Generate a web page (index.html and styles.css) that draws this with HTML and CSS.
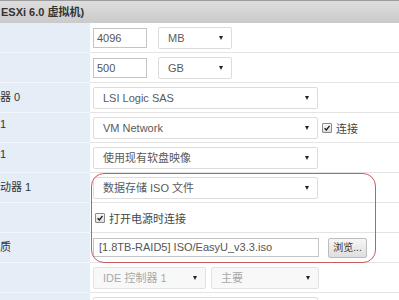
FILE: index.html
```html
<!DOCTYPE html>
<html lang="zh-CN">
<head>
    <meta charset="UTF-8">
    <meta name="viewport" content="width=device-width, initial-scale=1.0">
    <title>编辑设置</title>
    <link rel="stylesheet" href="styles.css">
</head>
<body>

    <div class="header">ESXi 6.0 虚拟机)</div>

    <div class="form">
        <!-- Memory -->
        <div class="row">
            <div class="label"></div>
            <div class="field">
                <div class="input small">4096</div>
                <div class="select unit">MB<span class="caret"></span></div>
            </div>
        </div>

        <!-- Hard disk -->
        <div class="row">
            <div class="label"></div>
            <div class="field">
                <div class="input small">500</div>
                <div class="select unit">GB<span class="caret"></span></div>
            </div>
        </div>

        <div class="row">
            <div class="label">器 0</div>
            <div class="field">
                <div class="select wide">LSI Logic SAS<span class="caret"></span></div>
            </div>
        </div>

        <div class="row">
            <div class="label">1</div>
            <div class="field">
                <div class="select wide">VM Network<span class="caret"></span></div>
                <span class="check"><svg viewBox="0 0 10 10"><path d="M2 5.2 L4.2 7.4 L8.2 2.4" /></svg></span>
                <span class="check-text">连接</span>
            </div>
        </div>

        <div class="row">
            <div class="label">1</div>
            <div class="field">
                <div class="select wide">使用现有软盘映像<span class="caret"></span></div>
            </div>
        </div>

        <!-- CD/DVD drive -->
        <div class="row">
            <div class="label">动器 1</div>
            <div class="field">
                <div class="select wide">数据存储 ISO 文件<span class="caret"></span></div>
            </div>
        </div>

        <div class="row">
            <div class="label"></div>
            <div class="field">
                <span class="check first"><svg viewBox="0 0 10 10"><path d="M2 5.2 L4.2 7.4 L8.2 2.4" /></svg></span>
                <span class="check-text">打开电源时连接</span>
            </div>
        </div>

        <div class="row">
            <div class="label">质</div>
            <div class="field">
                <div class="input path">[1.8TB-RAID5] ISO/EasyU_v3.3.iso</div>
                <div class="button">浏览...</div>
            </div>
        </div>

        <div class="row">
            <div class="label"></div>
            <div class="field">
                <div class="select disabled ide">IDE 控制器 1<span class="caret"></span></div>
                <div class="select disabled node">主要<span class="caret"></span></div>
            </div>
        </div>

        <div class="row">
            <div class="label"></div>
            <div class="field top">
                <div class="select wide"></div>
            </div>
        </div>

        <!-- annotation drawn over the CD/DVD rows -->
        <div class="mark"></div>
    </div>

</body>
</html>
```

FILE: styles.css
```css
/* Page */
html, body {
    height: 300px;
    overflow: hidden;
}

body {
    margin: 0;
    background-color: #fff;
    font-family: 'Liberation Sans', 'Noto Sans CJK SC', sans-serif;
    font-size: 11px;
    color: #333;
}

.header {
    height: 22px;
    border-top: 1px solid #9c9c9c;
    background: linear-gradient(#dedede, #cacaca);
    font-weight: bold;
    line-height: 22px;
    padding-left: 1px;
    color: #333;
}

.form {
    position: relative;
}

/* Rows */
.row {
    display: grid;
    grid-template-columns: 90px 1fr;
    height: 30px;
}

.label {
    background-color: #e5eef7;
    border-bottom: 1px solid #f3f7fb;
    padding-top: 5px;
    white-space: nowrap;
    overflow: hidden;
}

.field {
    display: flex;
    align-items: center;
    padding-left: 3px;
    border-bottom: 1px solid #e4e4e4;
}

.field.top {
    align-items: flex-start;
    padding-top: 4px;
}

/* Controls */
.input {
    box-sizing: border-box;
    height: 20px;
    line-height: 18px;
    padding: 0 3px;
    border: 1px solid #c4c4c4;
    color: #555;
    white-space: nowrap;
    overflow: hidden;
}

.input.small {
    width: 54px;
}

.input.path {
    width: 226px;
    height: 19px;
    line-height: 17px;
    padding-left: 5px;
}

.select {
    position: relative;
    box-sizing: border-box;
    height: 22px;
    line-height: 20px;
    padding-left: 9px;
    border: 1px solid #dcdcdc;
    border-radius: 2px;
    color: #5a5a5a;
    background-color: #fff;
    white-space: nowrap;
}

.select.unit {
    width: 74px;
    margin-left: 11px;
}

.select.wide {
    width: 225px;
}

.select.ide {
    width: 113px;
}

.select.node {
    width: 108px;
    margin-left: 5px;
}

.select.disabled {
    color: #a8a8a8;
    background-color: #f8f8f8;
    border-color: #e2e2e2;
}

.caret {
    position: absolute;
    right: 8px;
    top: 8px;
    width: 0;
    height: 0;
    border-left: 2.5px solid transparent;
    border-right: 2.5px solid transparent;
    border-top: 4px solid #222;
}

.check {
    box-sizing: border-box;
    width: 10px;
    height: 10px;
    margin-left: 4px;
    border: 1px solid #8a8a8a;
    border-radius: 1px;
    background: linear-gradient(#fafafa, #dedede);
}

.check.first {
    margin-left: 2px;
}

.check svg {
    display: block;
    width: 8px;
    height: 8px;
}

.check path {
    fill: none;
    stroke: #222;
    stroke-width: 1.8;
}

.check-text {
    margin-left: 4px;
    color: #444;
}

.button {
    box-sizing: border-box;
    height: 20px;
    width: 39px;
    margin-left: 9px;
    line-height: 18px;
    text-align: center;
    border: 1px solid #bcbcbc;
    border-radius: 2px;
    background: linear-gradient(#f6f6f6, #dedede);
    color: #333;
    font-size: 10px;
}

/* Red annotation */
.mark {
    position: absolute;
    left: 91px;
    top: 150px;
    width: 285px;
    height: 90px;
    box-sizing: border-box;
    border: 1.5px solid #cc5b5d;
    border-radius: 13px;
}
```
